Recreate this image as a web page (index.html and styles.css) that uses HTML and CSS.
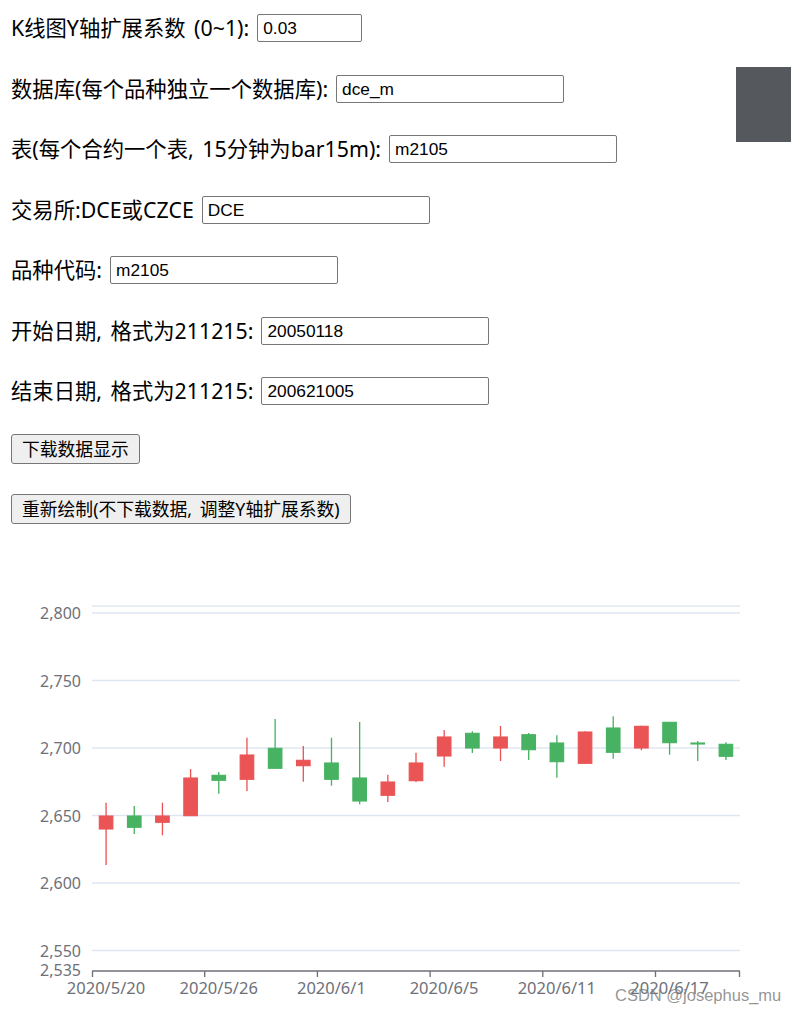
FILE: index.html
```html
<!DOCTYPE html>
<html lang="zh-CN">
<head>
<meta charset="utf-8">
<title>K线图</title>
<link rel="stylesheet" href="styles.css">
</head>
<body>
<div class="page">
  <div class="form">
    <div class="row"><span class="label">K线图Y轴扩展系数 (0~1):</span><input class="inp inp-sm" type="text" value="0.03"></div>
    <div class="row"><span class="label">数据库(每个品种独立一个数据库):</span><input class="inp" type="text" value="dce_m"></div>
    <div class="row"><span class="label">表(每个合约一个表, 15分钟为bar15m):</span><input class="inp" type="text" value="m2105"></div>
    <div class="row"><span class="label">交易所:DCE或CZCE</span><input class="inp" type="text" value="DCE"></div>
    <div class="row"><span class="label">品种代码:</span><input class="inp" type="text" value="m2105"></div>
    <div class="row"><span class="label">开始日期, 格式为211215:</span><input class="inp" type="text" value="20050118"></div>
    <div class="row"><span class="label">结束日期, 格式为211215:</span><input class="inp" type="text" value="200621005"></div>
  </div>
  <div class="actions">
    <button class="btn" type="button">下载数据显示</button>
    <button class="btn" type="button">重新绘制(不下载数据, 调整Y轴扩展系数)</button>
  </div>
  <svg class="chart" width="791" height="454" viewBox="0 560 791 454" xmlns="http://www.w3.org/2000/svg">
    <g class="grid">
      <line x1="92" y1="606" x2="740" y2="606"/>
      <line x1="92" y1="613" x2="740" y2="613"/>
      <line x1="92" y1="680.5" x2="740" y2="680.5"/>
      <line x1="92" y1="748" x2="740" y2="748"/>
      <line x1="92" y1="815.5" x2="740" y2="815.5"/>
      <line x1="92" y1="883" x2="740" y2="883"/>
      <line x1="92" y1="950.5" x2="740" y2="950.5"/>
    </g>
    <g class="ylabels">
      <text x="81" y="613">2,800</text>
      <text x="81" y="680.5">2,750</text>
      <text x="81" y="748">2,700</text>
      <text x="81" y="815.5">2,650</text>
      <text x="81" y="883">2,600</text>
      <text x="81" y="950.5">2,550</text>
      <text x="81" y="969.5">2,535</text>
    </g>
    <g class="xaxis">
      <line x1="92" y1="971" x2="740" y2="971"/>
      <line x1="92.5" y1="971" x2="92.5" y2="977"/>
      <line x1="204.7" y1="971" x2="204.7" y2="977"/>
      <line x1="317.4" y1="971" x2="317.4" y2="977"/>
      <line x1="430.1" y1="971" x2="430.1" y2="977"/>
      <line x1="542.8" y1="971" x2="542.8" y2="977"/>
      <line x1="655.5" y1="971" x2="655.5" y2="977"/>
      <line x1="739.5" y1="971" x2="739.5" y2="977"/>
    </g>
    <g class="xlabels">
      <text x="106" y="994">2020/5/20</text>
      <text x="218.7" y="994">2020/5/26</text>
      <text x="331.4" y="994">2020/6/1</text>
      <text x="444.1" y="994">2020/6/5</text>
      <text x="556.8" y="994">2020/6/11</text>
      <text x="669.5" y="994">2020/6/17</text>
    </g>
    <g class="candles" id="candles"></g>
    <text class="watermark" x="615" y="1001">CSDN @josephus_mu</text>
  </svg>
</div>
<div class="side-box"></div>
<script src="chart.js"></script>
</body>
</html>
```

FILE: chart.js
```javascript
(function () {
  var data = [
    ['r', 802.7, 816, 829, 865],
    ['g', 806, 816, 827.3, 834],
    ['r', 802.7, 816, 822.3, 835.3],
    ['r', 769, 778, 815.7, 815.7],
    ['g', 772, 775.3, 780.3, 793.7],
    ['r', 737.7, 755, 779.3, 791],
    ['g', 719, 748.3, 768.3, 768.3],
    ['r', 746, 760.3, 765.7, 781.7],
    ['g', 737.7, 763, 779.3, 785.7],
    ['g', 722, 778, 801, 804.3],
    ['r', 774.7, 782, 795.3, 802],
    ['r', 752.7, 763, 780.7, 782],
    ['r', 730, 737, 756, 766.7],
    ['g', 731.3, 733.3, 748, 753],
    ['r', 726, 737, 748, 761],
    ['g', 733, 734.7, 749.7, 760],
    ['g', 735.3, 743, 761.7, 777.7],
    ['r', 731.3, 732, 763.3, 764],
    ['g', 716.3, 728, 752.3, 758.7],
    ['r', 725.7, 726.3, 748, 750.3],
    ['g', 722.3, 722.3, 742.7, 754.7],
    ['g', 741, 743, 744, 761],
    ['g', 742.3, 744.3, 756.3, 760]
  ];
  var ns = 'http://www.w3.org/2000/svg';
  var g = document.getElementById('candles');
  var step = 648 / 23;
  data.forEach(function (d, i) {
    var cx = 92 + step * (i + 0.5);
    var cls = d[0] === 'r' ? 'up' : 'down';
    var wick = document.createElementNS(ns, 'line');
    wick.setAttribute('x1', cx);
    wick.setAttribute('x2', cx);
    wick.setAttribute('y1', d[1]);
    wick.setAttribute('y2', d[4]);
    wick.setAttribute('class', 'wick ' + cls);
    g.appendChild(wick);
    var body = document.createElementNS(ns, 'rect');
    body.setAttribute('x', cx - 6.8);
    body.setAttribute('width', 13.6);
    body.setAttribute('y', d[2]);
    body.setAttribute('height', Math.max(d[3] - d[2], 0.8));
    body.setAttribute('class', 'body ' + cls);
    g.appendChild(body);
  });
})();
```

FILE: styles.css
```css
html, body {
  margin: 0;
  padding: 0;
  background: #ffffff;
}

body {
  font-family: "Noto Sans", "Noto Sans CJK SC", sans-serif;
  color: #000000;
}

.page {
  position: relative;
  width: 791px;
}

.form {
  display: flex;
  flex-direction: column;
  gap: 30.5px;
  padding: 13px 0 0 11px;
}

.row {
  display: flex;
  align-items: center;
  gap: 8px;
  height: 30px;
}

.label {
  font-size: 21.33px;
  line-height: 30px;
  word-spacing: 3px;
  white-space: nowrap;
}

.inp {
  box-sizing: border-box;
  width: 228px;
  height: 28px;
  margin: 0;
  padding: 1px 4px 0 5px;
  border: 1px solid #767676;
  border-radius: 2px;
  font-family: "Liberation Sans", Arial, sans-serif;
  font-size: 17.3px;
  color: #000000;
  background: #ffffff;
}

.inp-sm {
  width: 105px;
}

.actions {
  display: flex;
  flex-direction: column;
  align-items: flex-start;
  gap: 30px;
  margin-top: 28px;
  padding-left: 11px;
}

.btn {
  box-sizing: border-box;
  height: 30px;
  margin: 0;
  padding: 0 10px;
  border: 1px solid #767676;
  border-radius: 3px;
  background: #efefef;
  font-family: "Noto Sans", "Noto Sans CJK SC", sans-serif;
  font-size: 17.8px;
  line-height: 26px;
  word-spacing: 3px;
  color: #000000;
}

.chart {
  display: block;
  margin-top: 36px;
}

.grid line {
  stroke: #e0e6f1;
  stroke-width: 1.33;
}

.ylabels text {
  font-family: "Noto Sans", sans-serif;
  font-size: 16px;
  fill: #6e7079;
  text-anchor: end;
  dominant-baseline: central;
}

.xaxis line {
  stroke: #6e7079;
  stroke-width: 1.33;
}

.xlabels text {
  font-family: "Noto Sans", sans-serif;
  font-size: 16.5px;
  fill: #6e7079;
  text-anchor: middle;
}

.wick {
  stroke-width: 1.33;
}

.wick.up {
  stroke: #eb5454;
}

.wick.down {
  stroke: #47b262;
}

.body {
  stroke-width: 1.1;
}

.body.up {
  fill: #eb5454;
  stroke: #eb5454;
}

.body.down {
  fill: #47b262;
  stroke: #47b262;
}

.watermark {
  font-family: "Liberation Sans", Arial, sans-serif;
  font-size: 16.5px;
  fill: rgba(130, 130, 130, 0.85);
}

.side-box {
  position: absolute;
  top: 67px;
  left: 736px;
  width: 55px;
  height: 75px;
  background: #55585c;
}
```
